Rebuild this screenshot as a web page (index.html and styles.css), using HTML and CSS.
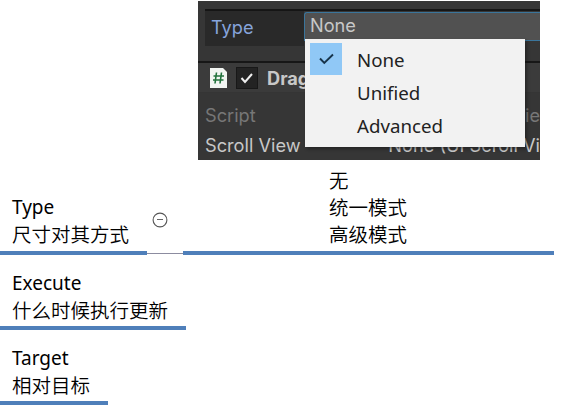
FILE: index.html
```html
<!DOCTYPE html>
<html lang="zh-CN">
<head>
<meta charset="utf-8">
<title>Type</title>
<link rel="stylesheet" href="styles.css">
</head>
<body>
<main class="map">
  <div class="branch">
    <section class="node node-type">
      <span class="latin">Type</span>
      <span>尺寸对其方式</span>
    </section>
    <div class="link">
      <svg class="toggle" width="16" height="16" viewBox="0 0 16 16"><circle cx="8" cy="8" r="6.9" fill="none" stroke="#555" stroke-width="1.1"/><path d="M5 7.5h6" stroke="#666"/></svg>
    </div>
    <section class="node detail">
      <div class="inspector">
        <div class="property">
          <div class="label">Type</div>
          <div class="field">None</div>
        </div>
        <div class="component">
          <svg class="script-icon" width="19" height="22" viewBox="0 0 19 22"><path d="M1 1h13l4 4v16H1z" fill="#f2f5f2"/><path d="M7.5 5.5L6 16.500M12.500 5.500L11 16.500M4.500 9h10.500M4 13h10.500" fill="none" stroke="#23733d" stroke-width="1.600"/></svg>
          <span class="check"><svg width="20" height="20" viewBox="0 0 20 20"><path d="M4.500 10l3.500 4 7-8" fill="none" stroke="#eee" stroke-width="2"/></svg></span>
          <b>Drag</b>
        </div>
        <div class="row script"><span>Script</span><span class="value">Vie</span></div>
        <div class="row"><span>Scroll View</span><span class="object">None (UI Scroll Vi</span></div>
        <div class="menu">
          <div class="option"><span class="selected"><svg width="32" height="32" viewBox="0 0 32 32"><path d="M10 15.500l4.300 4.500 8.700-8.500" fill="none" stroke="#17344b" stroke-width="1.900"/></svg></span>None</div>
          <div class="option">Unified</div>
          <div class="option">Advanced</div>
        </div>
      </div>
      <div class="modes"><span>无</span><span>统一模式</span><span>高级模式</span></div>
    </section>
  </div>
  <section class="node node-execute">
    <span class="latin">Execute</span>
    <span>什么时候执行更新</span>
  </section>
  <section class="node node-target">
    <span class="latin">Target</span>
    <span>相对目标</span>
  </section>
</main>
</body>
</html>
```
FILE: styles.css
```css
* { box-sizing: border-box; }
body {
  margin: 0;
  background: #fff;
  color: #000;
  font: 19.5px/27px "Noto Sans", "Noto Sans CJK SC", sans-serif;
  overflow: hidden;
}
svg { display: block; }
.map { width: 574px; height: 415px; overflow: hidden; }
.branch { display: flex; align-items: flex-end; height: 255px; }
.node {
  display: flex;
  flex-direction: column;
  border-bottom: 4px solid #4f7fba;
  padding: 0 0 4px 12px;
  white-space: nowrap;
}
.node span { font-weight: 350; font-family: "Noto Sans CJK SC", sans-serif; height: 27px; }
.node .latin { font: 400 19px/27px "Noto Sans", sans-serif; height: 26px; }
.node-type { width: 147px; }
.link { width: 36px; height: 42px; border-bottom: 1px solid #8c8ca0; margin-bottom: 1px; }
.toggle { margin: 0 0 0 4.5px; }
.detail { width: 370.500px; height: 254px; padding: 0 0 0 15px; }
.node-execute { width: 186px; height: 75px; padding-top: 15px; }
.node-target { width: 108px; height: 75px; padding-top: 15px; }
.modes { display: flex; flex-direction: column; padding: 6px 0 0 131px; }

.inspector {
  position: relative;
  flex: none;
  width: 342px;
  height: 159px;
  padding-top: 8px;
  overflow: hidden;
  background: #363636;
  color: #c8c8c8;
  font: 18.200px/24px Inter, sans-serif;
}
.inspector span { font-family: inherit; font-weight: inherit; height: auto; }
.property { display: flex; height: 52px; border-top: 2px solid #151515; margin-left: 7px; }
.label { width: 99px; height: 35px; padding: 4px 0 0 6px; background: #292929; color: #86a4dc; }
.field { flex: 1; height: 29px; margin-top: 1px; padding: 0 5px; background: #515151; border: 1px solid #3b759b; border-right: 0; border-radius: 3px 0 0; }
.component { display: flex; align-items: center; height: 32px; padding-left: 11px; background: #3b3b3b; border-top: 2px solid #171717; border-bottom: 1px solid #353535; }
.check { margin: 0 9px 0 8px; background: #232323; border: 1px solid #181818; }
.row { display: flex; height: 30px; padding: 10px 0 0 7px; }
.row > span:first-child { width: 187px; }
.script { color: #777; }
.script .value { padding-left: 127px; }
.menu {
  position: absolute;
  left: 107px;
  top: 38px;
  width: 220px;
  height: 108px;
  padding-top: 4px;
  background: #f2f2f2;
  box-shadow: 2px 2px 3px #1117;
  color: #222;
  font: 18.700px/33px "Noto Sans", sans-serif;
}
.option { position: relative; height: 33px; padding-left: 52px; }
.selected { position: absolute; left: 5px; top: 0; width: 32px; background: #90c8f6; }
```
